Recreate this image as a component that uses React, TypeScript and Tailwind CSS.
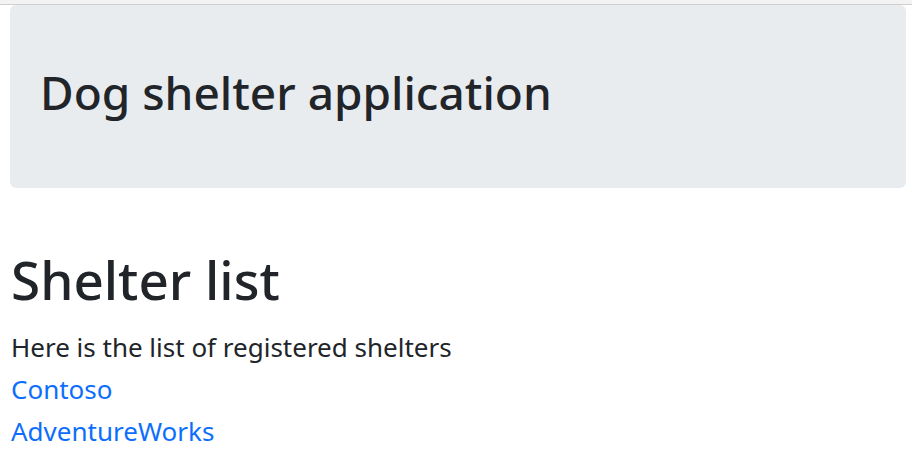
const shelters = ["Contoso", "AdventureWorks"];

export default function App() {
  return (
    <div className="min-h-[460px] bg-white text-[#212529]" style={{ fontFamily: '"Noto Sans", "Open Sans", sans-serif' }}>
      <div className="h-[5px] bg-[#f3f3f3] border-b border-[#cfcfcf]" />
      <div className="ml-[10px] mr-[6px] rounded-md bg-[#e9ecef] pl-[30px] pt-[60px] pb-[68px]">
        <h1 className="text-[46px] leading-[55px] font-medium">Dog shelter application</h1>
      </div>
      <div className="px-[11px] pt-[59px]">
        <h2 className="text-[53px] leading-[65px] font-medium">Shelter list</h2>
        <p className="mt-[14px] text-[26px] leading-[42px]">Here is the list of registered shelters</p>
        {shelters.map((name) => (
          <div key={name} className="text-[26px] leading-[42px]">
            <a href="#" className="text-[#0d6efd]">{name}</a>
          </div>
        ))}
      </div>
    </div>
  );
}
